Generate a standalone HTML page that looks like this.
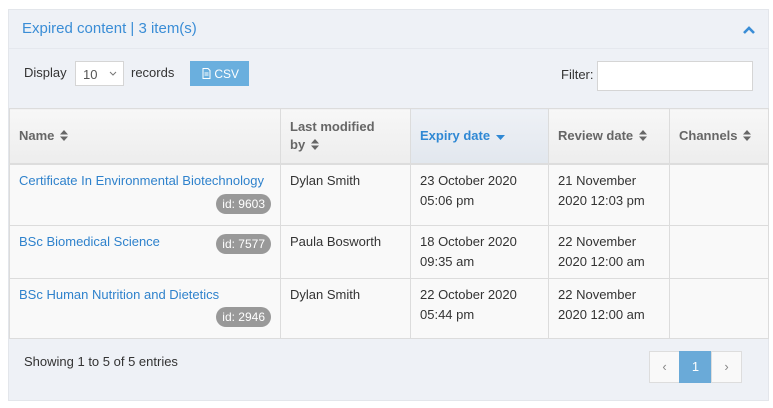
<!DOCTYPE html>
<html><head><style>
*{box-sizing:border-box;margin:0;padding:0}
body{width:773px;height:408px;background:#fff;font-family:"Liberation Sans",sans-serif;font-size:13px;color:#333;position:relative;overflow:hidden}
.panel{position:absolute;left:8px;top:9px;width:761px;height:392px;background:#eef1f6;border:1px solid #e3e6eb}
.hd{position:absolute;left:0;top:0;width:100%;height:39px;border-bottom:1px solid #e5e8ee}
.title{position:absolute;left:13px;top:10px;font-size:15px;color:#3a8dd6}
.a{position:absolute;color:#333}
.sel{position:absolute;left:75px;top:61px;width:49px;height:25px;background:#fff;border:1px solid #d5d5d5;font-size:13px;color:#555;padding:5px 0 0 7px}
.csv{position:absolute;left:190px;top:61px;width:59px;height:25px;background:#6aafde;color:#fff;font-size:12px;padding:6px 0 0 12px}
.filt{position:absolute;left:597px;top:61px;width:156px;height:30px;background:#fff;border:1px solid #d5d5d5}
table{position:absolute;left:9px;top:108px;border-collapse:collapse;width:760px}
td,th{border:1px solid #dcdcdc;vertical-align:top;text-align:left;padding:0 9px}
th{height:55px;background:linear-gradient(#f7f7f7,#ededed);color:#666;font-size:13px;font-weight:bold;vertical-align:middle;border-bottom:2px solid #ddd;line-height:18px}
th.x{background:linear-gradient(#eef1f6,#e2e7ee);color:#2f88d4}
td{background:#f9f9f9;padding-top:6px;line-height:20px;position:relative}
td a{color:#2f82cc;text-decoration:none}
.id{position:absolute;right:9px;background:#999;color:#fff;border-radius:10px;font-size:12px;padding:0 6px;line-height:20px}
.pg{position:absolute;top:351px;height:32px;border:1px solid #ddd;background:#f9f9f9;color:#888;text-align:center;line-height:30px;font-size:13px}
.s{display:inline-block;vertical-align:-1px;margin-left:2px}
</style></head><body>
<div class="panel"><div class="hd"><div class="title">Expired content | 3 item(s)</div>
<svg style="position:absolute;right:12px;top:15px" width="14" height="10" viewBox="0 0 14 10"><path d="M2 8 L7 3 L12 8" stroke="#3a8dd6" stroke-width="2.6" fill="none"/></svg></div></div>
<div class="a" style="left:24px;top:65px">Display</div>
<div class="sel">10<svg style="position:absolute;right:6px;top:9px" width="8" height="5" viewBox="0 0 8 5"><path d="M1 1l3 3 3-3" stroke="#777" fill="none"/></svg></div>
<div class="a" style="left:131px;top:65px">records</div>
<div class="csv"><svg width="9" height="11" viewBox="0 0 9 11" style="vertical-align:-1px"><path d="M1 .5h5l2 2v8H1z" fill="none" stroke="#fff"/><path d="M2.5 5h4M2.5 7h4" stroke="#fff"/></svg> CSV</div>
<div class="a" style="left:561px;top:67px">Filter:</div>
<div class="filt"></div>
<table>
<tr><th style="width:271px">Name <svg class="s" width="8" height="11" viewBox="0 0 8 11"><path d="M0 4.5L4 0 8 4.5zM0 6.5L4 11 8 6.5z" fill="#666"/></svg></th><th style="width:130px">Last modified<br>by <svg class="s" width="8" height="11" viewBox="0 0 8 11"><path d="M0 4.5L4 0 8 4.5zM0 6.5L4 11 8 6.5z" fill="#666"/></svg></th><th class="x" style="width:138px">Expiry date <svg class="s" width="9" height="6" viewBox="0 0 9 6"><path d="M0 0L4.5 5 9 0z" fill="#2f88d4"/></svg></th><th style="width:121px">Review date <svg class="s" width="8" height="11" viewBox="0 0 8 11"><path d="M0 4.5L4 0 8 4.5zM0 6.5L4 11 8 6.5z" fill="#666"/></svg></th><th>Channels <svg class="s" width="8" height="11" viewBox="0 0 8 11"><path d="M0 4.5L4 0 8 4.5zM0 6.5L4 11 8 6.5z" fill="#666"/></svg></th></tr>
<tr style="height:62px"><td><a>Certificate In Environmental Biotechnology</a><span class="id" style="top:29px">id: 9603</span></td><td>Dylan Smith</td><td>23 October 2020<br>05:06 pm</td><td>21 November<br>2020 12:03 pm</td><td></td></tr>
<tr style="height:53px"><td><a>BSc Biomedical Science</a><span class="id" style="top:8px">id: 7577</span></td><td>Paula Bosworth</td><td>18 October 2020<br>09:35 am</td><td>22 November<br>2020 12:00 am</td><td></td></tr>
<tr style="height:60px"><td><a>BSc Human Nutrition and Dietetics</a><span class="id" style="top:28px">id: 2946</span></td><td>Dylan Smith</td><td>22 October 2020<br>05:44 pm</td><td>22 November<br>2020 12:00 am</td><td></td></tr>
</table>
<div class="a" style="left:24px;top:354px">Showing 1 to 5 of 5 entries</div>
<div class="pg" style="left:649px;width:31px">&#8249;</div>
<div class="pg" style="left:679px;width:33px;background:#6aaad8;border-color:#6aaad8;color:#fff">1</div>
<div class="pg" style="left:711px;width:31px">&#8250;</div>
</body></html>
